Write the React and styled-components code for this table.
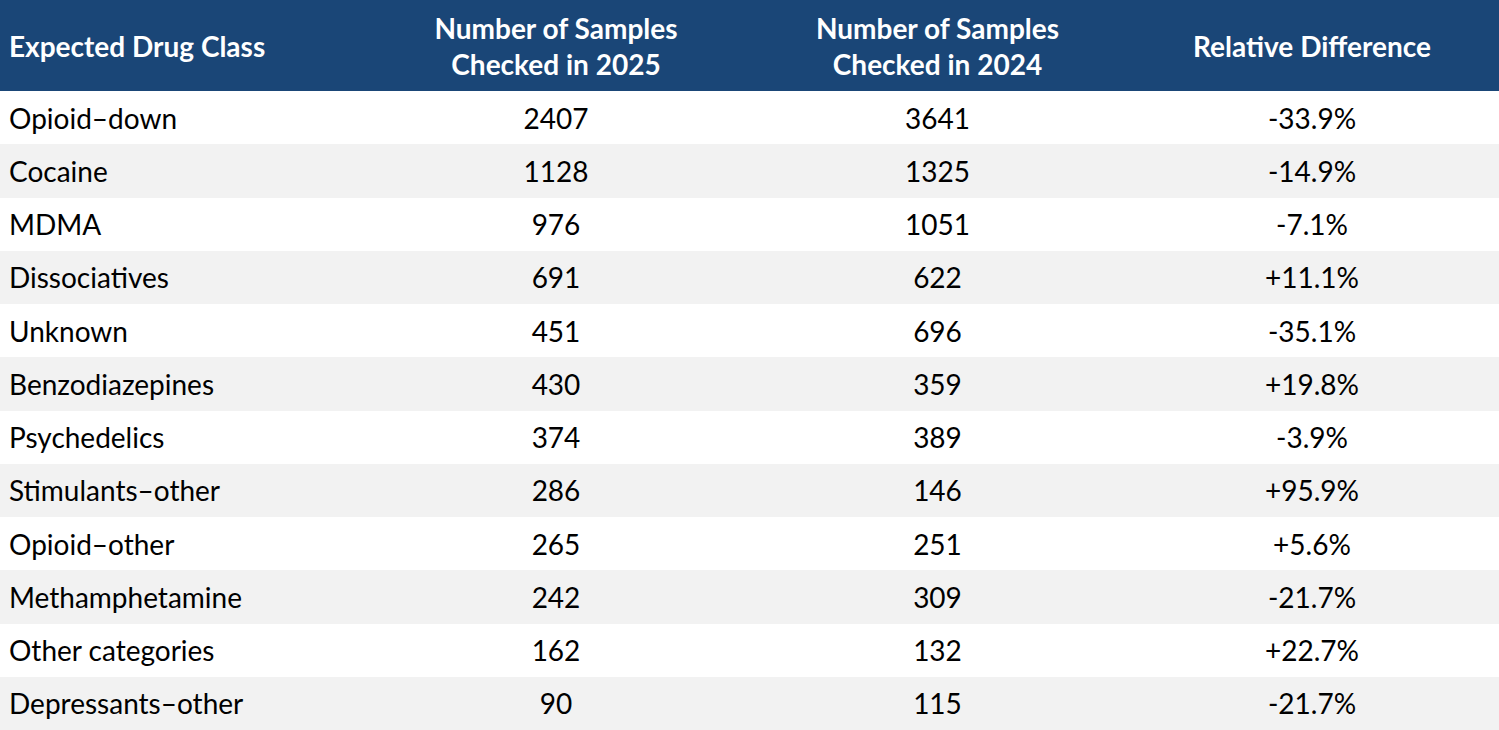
import React from "react";
import styled, { createGlobalStyle } from "styled-components";

const Global = createGlobalStyle`
  html, body { margin: 0; padding: 0; background: #ffffff; }
  body { font-family: Lato, "Noto Sans", sans-serif; color: #000; }
`;

const Table = styled.div`
  width: 1499px;
  display: grid;
  grid-template-columns: 362px 388px 375px 374px;
  grid-template-rows: 91px repeat(12, 53.25px);
`;

const HeadCell = styled.div`
  background: #1a4677;
  color: #ffffff;
  font-weight: 700;
  font-size: 28px;
  line-height: 36px;
  display: flex;
  align-items: center;
  justify-content: ${(p) => (p.$left ? "flex-start" : "center")};
  text-align: ${(p) => (p.$left ? "left" : "center")};
  padding: ${(p) => (p.$left ? "0 0 0 9px" : "0")};
  white-space: nowrap;
`;

const Cell = styled.div`
  background: ${(p) => (p.$shade ? "#f2f2f2" : "#ffffff")};
  font-size: 28px;
  display: flex;
  align-items: center;
  justify-content: ${(p) => (p.$left ? "flex-start" : "center")};
  padding: ${(p) => (p.$left ? "0 0 0 9px" : "0")};
  white-space: nowrap;
`;

const rows = [
  ["Opioid–down", "2407", "3641", "-33.9%"],
  ["Cocaine", "1128", "1325", "-14.9%"],
  ["MDMA", "976", "1051", "-7.1%"],
  ["Dissociatives", "691", "622", "+11.1%"],
  ["Unknown", "451", "696", "-35.1%"],
  ["Benzodiazepines", "430", "359", "+19.8%"],
  ["Psychedelics", "374", "389", "-3.9%"],
  ["Stimulants–other", "286", "146", "+95.9%"],
  ["Opioid–other", "265", "251", "+5.6%"],
  ["Methamphetamine", "242", "309", "-21.7%"],
  ["Other categories", "162", "132", "+22.7%"],
  ["Depressants–other", "90", "115", "-21.7%"],
];

export default function App() {
  return (
    <>
      <Global />
      <Table>
        <HeadCell $left>Expected Drug Class</HeadCell>
        <HeadCell>Number of Samples<br />Checked in 2025</HeadCell>
        <HeadCell>Number of Samples<br />Checked in 2024</HeadCell>
        <HeadCell>Relative Difference</HeadCell>
        {rows.map((r, i) =>
          r.map((v, j) => (
            <Cell key={i + "-" + j} $shade={i % 2 === 1} $left={j === 0}>
              {v}
            </Cell>
          ))
        )}
      </Table>
    </>
  );
}
